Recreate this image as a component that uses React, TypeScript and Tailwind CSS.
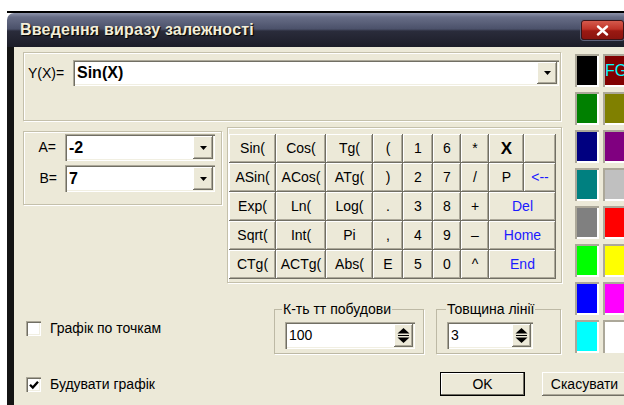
import React from 'react';

const font = "font-['Liberation_Sans',Arial,sans-serif]";
const raised = 'bg-[#ece9d8] shadow-[inset_-1px_-1px_0_#716f64,inset_1px_1px_0_#ffffff,inset_-2px_-2px_0_#aca899]';
const sunken = 'bg-white shadow-[inset_1px_1px_0_#aca899,inset_2px_2px_0_#716f64,inset_-1px_-1px_0_#ffffff,inset_-2px_-2px_0_#f1efe2]';
const etched = 'border border-[#c4c0ab] shadow-[inset_1px_1px_0_#ffffff,1px_1px_0_#ffffff]';

type Key = { label: string; wide?: boolean; blue?: boolean; bold?: boolean };

const keys: Key[] = [
  { label: 'Sin(' }, { label: 'Cos(' }, { label: 'Tg(' }, { label: '(' }, { label: '1' }, { label: '6' }, { label: '*' }, { label: 'X', bold: true }, { label: '' },
  { label: 'ASin(' }, { label: 'ACos(' }, { label: 'ATg(' }, { label: ')' }, { label: '2' }, { label: '7' }, { label: '/' }, { label: 'P' }, { label: '<--', blue: true },
  { label: 'Exp(' }, { label: 'Ln(' }, { label: 'Log(' }, { label: '.' }, { label: '3' }, { label: '8' }, { label: '+' }, { label: 'Del', wide: true, blue: true },
  { label: 'Sqrt(' }, { label: 'Int(' }, { label: 'Pi' }, { label: ',' }, { label: '4' }, { label: '9' }, { label: '–' }, { label: 'Home', wide: true, blue: true },
  { label: 'CTg(' }, { label: 'ACTg(' }, { label: 'Abs(' }, { label: 'E' }, { label: '5' }, { label: '0' }, { label: '^' }, { label: 'End', wide: true, blue: true },
];

const swatches = [
  '#000000', '#800000',
  '#008000', '#808000',
  '#000080', '#800080',
  '#008080', '#c0c0c0',
  '#808080', '#ff0000',
  '#00ff00', '#ffff00',
  '#0000ff', '#ff00ff',
  '#00ffff', '#ffffff',
];

function DropButton() {
  return (
    <div className={`ml-auto flex h-full w-[20px] shrink-0 items-center justify-center ${raised}`}>
      <svg width="7" height="4" viewBox="0 0 7 4">
        <path d="M0 0h7L3.5 4z" fill="#000" />
      </svg>
    </div>
  );
}

function Spinner() {
  return (
    <div className={`ml-auto flex h-full w-[19px] shrink-0 items-center justify-center ${raised}`}>
      <svg width="13" height="17" viewBox="0 0 13 17">
        <path d="M0.5 6.5h12L6.5 1z" fill="#000" />
        <path d="M1 8.5h11" stroke="#000" strokeWidth="1" />
        <path d="M0.5 10.5h12L6.5 16z" fill="#000" />
      </svg>
    </div>
  );
}

function Combo({ value, className }: { value: string; className: string }) {
  return (
    <div className={`flex p-[2px] ${sunken} ${className}`}>
      <span className="flex items-center pl-[2px] text-[16px] font-bold text-black">{value}</span>
      <DropButton />
    </div>
  );
}

function SpinBox({ value, className }: { value: string; className: string }) {
  return (
    <div className={`flex p-[2px] ${sunken} ${className}`}>
      <span className="flex items-center pl-[2px] text-[14px] text-black">{value}</span>
      <Spinner />
    </div>
  );
}

function CheckBox({ checked, label }: { checked?: boolean; label: string }) {
  return (
    <div className="flex items-center pl-[3px]">
      <div className={`flex h-[15px] w-[15px] items-center justify-center pl-[1px] pt-[1px] ${sunken}`}>
        {checked ? (
          <svg width="10" height="10" viewBox="0 0 10 10">
            <path d="M1 4.8l2.8 2.8L9 1.8" stroke="#000" strokeWidth="2.3" fill="none" />
          </svg>
        ) : null}
      </div>
      <span className="ml-[9px] text-[14px] text-black">{label}</span>
    </div>
  );
}

export default function App() {
  return (
    <div className={`h-[405px] w-[624px] overflow-hidden bg-white ${font}`}>
      <div className="ml-[7px] mt-[11px] w-[617px] border-t-2 border-black">
        {/* title bar */}
        <div className="flex h-[34px] items-center rounded-tl-[7px] bg-[linear-gradient(to_bottom,#8d93aa_0%,#676d86_12%,#4b516a_47%,#2a2c3b_53%,#1c1d28_100%)] pl-[13px]">
          <span className="text-[16px] font-bold tracking-[0.2px] text-[#f3eed9] [text-shadow:1px_1px_1px_#000]">
            Введення виразу залежності
          </span>
          <div className="ml-auto flex h-[20px] w-[43px] items-center justify-center rounded-[3px] border border-[#3c1216] bg-[linear-gradient(to_bottom,#d55a4c_0%,#bf3328_45%,#9a1912_55%,#8a140f_100%)] shadow-[0_0_0_1px_#5d627a]">
            <svg width="13" height="11" viewBox="0 0 13 11">
              <path d="M2 1.5l9 8M11 1.5l-9 8" stroke="#fff" strokeWidth="2.4" strokeLinecap="round" />
            </svg>
          </div>
        </div>

        <div className="flex h-[358px]">
          <div className="w-[7px] shrink-0 bg-[#141414]" />
          <div className="flex flex-1 overflow-hidden bg-[#ece9d8] pl-[9px] pt-[5px]">
            {/* main column */}
            <div className="flex w-[539px] shrink-0 flex-col">
              <div className={`flex h-[69px] w-[538px] items-start pl-[4px] pt-[7px] ${etched}`}>
                <span className="flex h-[26px] w-[45px] items-center text-[14px] text-black">Y(X)=</span>
                <Combo value="Sin(X)" className="h-[26px] w-[486px]" />
              </div>

              <div className="mt-[6px] flex items-start">
                <div className={`mt-[4px] flex h-[74px] w-[199px] flex-col gap-[4px] pt-[2px] ${etched}`}>
                  <div className="flex items-center">
                    <span className="w-[41px] pr-[9px] text-right text-[14px] text-black">A=</span>
                    <Combo value="-2" className="h-[27px] w-[150px]" />
                  </div>
                  <div className="flex items-center">
                    <span className="w-[41px] pr-[8px] text-right text-[14px] text-black">B=</span>
                    <Combo value="7" className="h-[27px] w-[150px]" />
                  </div>
                </div>

                <div className={`ml-[5px] h-[156px] w-[335px] pl-[1px] pt-[6px] ${etched}`}>
                  <div className="grid auto-rows-[29px] grid-cols-[47px_50px_47px_30px_30px_28px_28px_35px_32px]">
                    {keys.map((k, i) => (
                      <div
                        key={i}
                        className={`flex items-center justify-center ${raised} ${k.wide ? 'col-span-2' : ''} ${
                          k.blue ? 'text-[#1a1aff]' : 'text-black'
                        } ${k.bold ? 'text-[17px] font-bold' : 'text-[14px]'}`}
                      >
                        {k.label}
                      </div>
                    ))}
                  </div>
                </div>
              </div>

              {/* options and group boxes */}
              <div className="mt-[19px] flex h-[52px]">
                <div className="flex w-[251px] items-center">
                  <CheckBox label="Графік по точкам" />
                </div>
                <fieldset className="h-[52px] w-[150px] border border-[#bdb9a5] shadow-[1px_1px_0_#ffffff]">
                  <legend className="ml-[7px] bg-[#ece9d8] px-[1px] text-[14px] leading-[14px] text-black">К-ть тт побудови</legend>
                  <SpinBox value="100" className="ml-[10px] mt-[6px] h-[27px] w-[130px]" />
                </fieldset>
                <fieldset className="ml-[12px] h-[52px] w-[125px] border border-[#bdb9a5] shadow-[1px_1px_0_#ffffff]">
                  <legend className="ml-[9px] bg-[#ece9d8] px-[1px] text-[14px] leading-[14px] text-black">Товщина лінії</legend>
                  <SpinBox value="3" className="ml-[10px] mt-[6px] h-[27px] w-[86px]" />
                </fieldset>
              </div>

              <div className="mt-[18px] flex h-[24px] items-center">
                <div className="w-[417px] shrink-0">
                  <CheckBox checked label="Будувати графік" />
                </div>
                <div className="flex h-[24px] w-[85px] shrink-0 items-center justify-center border border-black bg-[#ece9d8] text-[14px] text-black shadow-[inset_-1px_-1px_0_#716f64,inset_1px_1px_0_#ffffff]">
                  OK
                </div>
                <div className={`ml-[17px] flex h-[24px] w-[85px] shrink-0 items-center justify-center text-[14px] text-black ${raised}`}>
                  Скасувати
                </div>
              </div>
            </div>

            {/* colour palette */}
            <div className="ml-[13px] mt-[2px] grid shrink-0 auto-rows-[33px] grid-cols-[24px_24px] gap-x-[4px] gap-y-[5px]">
              {swatches.map((c, i) => (
                <div key={i} className="p-[2px] shadow-[inset_2px_2px_0_#aca899,inset_-2px_-2px_0_#ffffff]">
                  <div className="flex h-full w-full items-center overflow-hidden" style={{ backgroundColor: c }}>
                    {i === 1 ? <span className="text-[16px] leading-none text-[#00ffff]">FG</span> : null}
                  </div>
                </div>
              ))}
            </div>
          </div>
        </div>
      </div>
    </div>
  );
}
